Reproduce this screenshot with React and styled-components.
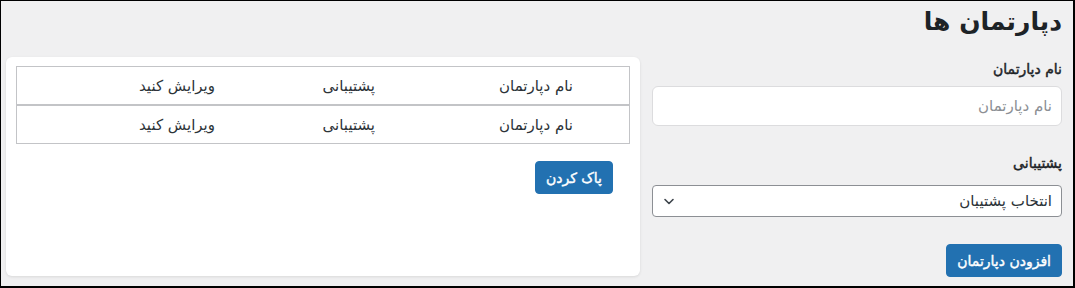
import styled, { createGlobalStyle } from "styled-components";

const GlobalStyle = createGlobalStyle`
    html, body {
        margin: 0;
        padding: 0;
        background: #f0f0f1;
    }
    body {
        font-family: "DejaVu Sans", "Noto Sans", sans-serif;
        color: #1d2327;
    }
`;

const Page = styled.div`
    box-sizing: border-box;
    width: 1075px;
    height: 288px;
    direction: rtl;
    background: #f0f0f1;
    border-top: 1px solid #000;
    border-left: 1px solid #000;
    border-right: 2px solid #000;
    border-bottom: 2px solid #000;
    padding: 0 11px 0 5px;
    overflow: hidden;
`;

const Title = styled.h1`
    margin: 3px 0 0;
    font-size: 25px;
    font-weight: 700;
    line-height: 36px;
    color: #1d2327;
`;

const Columns = styled.div`
    display: flex;
    gap: 12px;
    margin-top: 17px;
    align-items: flex-start;
`;

const Form = styled.form`
    width: 410px;
    flex: none;
    display: flex;
    flex-direction: column;
`;

const Label = styled.label`
    display: block;
    font-size: 14px;
    font-weight: 400;
    -webkit-text-stroke: 0.45px #1d2327;
    line-height: 20px;
    color: #1d2327;
    margin: ${({ $first }) => ($first ? "2px 0 7px" : "27px 0 12px")};
`;

const TextInput = styled.input`
    box-sizing: border-box;
    width: 100%;
    height: 40px;
    padding: 0 9px;
    font-family: inherit;
    font-size: 15px;
    background: #fff;
    border: 1px solid #dcdcde;
    border-radius: 6px;
    outline: none;
    color: #2c3338;

    &::placeholder {
        color: #8c8f94;
    }
`;

const SelectBox = styled.div`
    box-sizing: border-box;
    width: 100%;
    height: 32px;
    padding: 0 9px;
    display: flex;
    align-items: center;
    justify-content: space-between;
    background: #fff;
    border: 1px solid #8c8f94;
    border-radius: 4px;
    font-size: 15px;
    color: #2c3338;
`;

const Chevron = styled.svg`
    width: 12px;
    height: 12px;
    margin-left: 1px;
`;

const Button = styled.button`
    align-self: flex-start;
    box-sizing: border-box;
    height: 33px;
    padding: 0 10px;
    background: #2271b1;
    border: 1px solid #2271b1;
    border-radius: 4px;
    color: #fff;
    font-family: inherit;
    font-size: 14px;
    font-weight: 400;
    -webkit-text-stroke: 0.4px #fff;
    cursor: pointer;
    margin: ${({ $margin }) => $margin || "0"};
`;

const Card = styled.div`
    flex: 1;
    box-sizing: border-box;
    height: 219px;
    background: #fff;
    border-radius: 6px;
    box-shadow: 0 1px 3px rgba(0, 0, 0, 0.1);
    padding: 9px 10px;
    display: flex;
    flex-direction: column;
`;

const Table = styled.div`
    border: 1px solid #c3c4c7;
`;

const Row = styled.div`
    display: grid;
    grid-template-columns: 198px 160px 1fr;
    padding-right: 56px;
    height: 37px;
    align-items: center;
    font-size: 15px;
    color: #2c3338;
    & + & {
        border-top: 2px solid #c3c4c7;
    }
`;

const Cell = styled.div`
    text-align: right;
`;

const rows = [
    { name: "نام دپارتمان", support: "پشتیبانی", action: "ویرایش کنید" },
    { name: "نام دپارتمان", support: "پشتیبانی", action: "ویرایش کنید" },
];

export default function App() {
    return (
        <>
            <GlobalStyle />
            <Page>
                <Title>دپارتمان ها</Title>
                <Columns>
                    <Form onSubmit={(e) => e.preventDefault()}>
                        <Label $first>نام دپارتمان</Label>
                        <TextInput placeholder="نام دپارتمان" />
                        <Label>پشتیبانی</Label>
                        <SelectBox>
                            <span>انتخاب پشتیبان</span>
                            <Chevron viewBox="0 0 12 12" fill="none">
                                <path
                                    d="M2 4.5 6 8.5 10 4.5"
                                    stroke="#3c434a"
                                    strokeWidth="1.6"
                                    strokeLinecap="round"
                                    strokeLinejoin="round"
                                />
                            </Chevron>
                        </SelectBox>
                        <Button type="submit" $margin="27px 0 0">
                            افزودن دپارتمان
                        </Button>
                    </Form>
                    <Card>
                        <Table>
                            {rows.map((row, i) => (
                                <Row key={i}>
                                    <Cell>{row.name}</Cell>
                                    <Cell>{row.support}</Cell>
                                    <Cell>{row.action}</Cell>
                                </Row>
                            ))}
                        </Table>
                        <Button type="button" $margin="17px 17px 0 0">
                            پاک کردن
                        </Button>
                    </Card>
                </Columns>
            </Page>
        </>
    );
}
